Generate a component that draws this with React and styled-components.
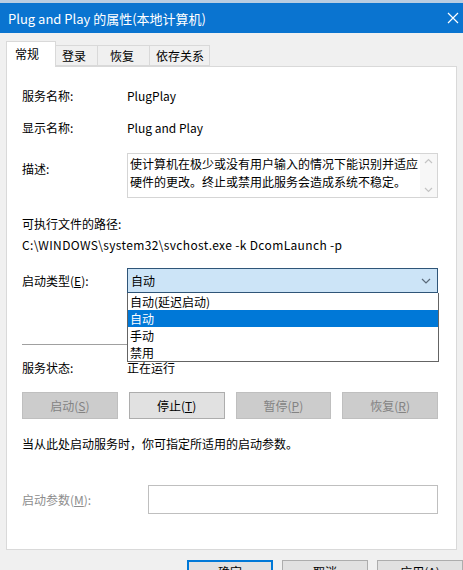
import React from 'react';
import styled, { createGlobalStyle } from 'styled-components';

const GlobalStyle = createGlobalStyle`
  html, body {
    margin: 0;
    padding: 0;
    width: 463px;
    height: 570px;
    overflow: hidden;
    background: #f0f0f0;
  }
  * {
    box-sizing: border-box;
  }
`;

const Window = styled.div`
  width: 463px;
  height: 570px;
  display: flex;
  flex-direction: column;
  background: #f0f0f0;
  font-family: "Noto Sans CJK SC", "Noto Sans", sans-serif;
  font-size: 12px;
  color: #000;
  overflow: hidden;

  & > * {
    flex-shrink: 0;
  }
`;

const TopStrip = styled.div`
  height: 3px;
  background: #b9cde2;
`;

const TitleBar = styled.div`
  height: 30px;
  background: #0a74d0;
  color: #fff;
  display: flex;
  align-items: center;
  justify-content: space-between;
  padding: 0 4px 0 8px;
  font-size: 13px;
`;

const TitleText = styled.span`
  line-height: 1;
`;

const CloseIcon = () => (
  <svg width="12" height="12" viewBox="0 0 12 12">
    <path d="M1 1 L11 11 M11 1 L1 11" stroke="#fff" strokeWidth="1.2" fill="none" />
  </svg>
);

const TabRow = styled.div`
  display: flex;
  align-items: flex-end;
  margin: 8px 0 0 6px;
  height: 25px;
  position: relative;
  z-index: 1;
`;

const Tab = styled.div`
  width: ${p => p.$w}px;
  height: ${p => (p.$active ? 26 : 21)}px;
  display: flex;
  align-items: ${p => (p.$active ? 'flex-start' : 'center')};
  padding: ${p => (p.$active ? '3px 0 0 8px' : `0 0 0 ${p.$pl || 6}px`)};
  background: ${p => (p.$active ? '#fff' : '#f0f0f0')};
  border: 1px solid #d9d9d9;
  border-bottom: ${p => (p.$active ? 'none' : '1px solid #d9d9d9')};
  border-left: ${p => (p.$first || p.$active ? '1px solid #d9d9d9' : 'none')};
  margin-bottom: ${p => (p.$active ? '-1px' : '0')};
  font-size: 12px;
`;

const Panel = styled.div`
  margin: 0 6px;
  height: 484px;
  background: #fff;
  border: 1px solid #d9d9d9;
  padding: 21px 18px 0 15px;
  display: flex;
  flex-direction: column;
`;

const Row = styled.div`
  display: grid;
  grid-template-columns: ${p => p.$label || 105}px 1fr;
  align-items: ${p => p.$top ? 'start' : 'center'};
  margin-top: ${p => p.$mt || 0}px;
`;

const Label = styled.div`
  line-height: 16px;
  color: ${p => (p.$disabled ? '#8d8d8d' : '#000')};
  padding-top: ${p => p.$pt || 0}px;
`;

const Value = styled.div`
  line-height: 16px;
`;

const Line = styled.div`
  line-height: 16px;
  margin-top: ${p => p.$mt || 0}px;
  white-space: nowrap;
  letter-spacing: ${p => p.$ls || 0}px;
`;

const DescBox = styled.div`
  height: 45px;
  border: 1px solid #d5d5d5;
  display: flex;
`;

const DescText = styled.div`
  flex: 1;
  padding: 1px 0 0 2px;
  line-height: 18px;
  white-space: pre-line;
`;

const ScrollBar = styled.div`
  width: 17px;
  display: flex;
  flex-direction: column;
  justify-content: space-between;
  align-items: center;
  padding: 4px 0;
  background: #f7f7f7;
`;

const Arrow = ({ up }) => (
  <svg width="9" height="6" viewBox="0 0 9 6">
    <path d={up ? 'M1 5 L4.5 1.5 L8 5' : 'M1 1 L4.5 4.5 L8 1'} stroke="#c4c4c4" strokeWidth="1.2" fill="none" />
  </svg>
);

const SelectWrap = styled.div`
  position: relative;
  z-index: 2;
`;

const Select = styled.div`
  height: 25px;
  background: #cce4f7;
  border: 1px solid #2f5578;
  display: flex;
  align-items: center;
  justify-content: space-between;
  padding: 0 6px 0 3px;
`;

const Chevron = () => (
  <svg width="10" height="6" viewBox="0 0 10 6">
    <path d="M1 1 L5 5 L9 1" stroke="#5a6a7a" strokeWidth="1.2" fill="none" />
  </svg>
);

const DropList = styled.div`
  position: absolute;
  left: 0;
  right: -1px;
  top: 25px;
  background: #fff;
  border: 1px solid #646464;
  border-top: none;
`;

const Option = styled.div`
  height: 17px;
  line-height: 17px;
  padding-left: 2px;
  background: ${p => (p.$selected ? '#0078d7' : 'transparent')};
  color: ${p => (p.$selected ? '#fff' : '#000')};
`;

const Separator = styled.div`
  height: 1px;
  background: #a0a0a0;
  margin-top: 51px;
`;

const ButtonRow = styled.div`
  display: grid;
  grid-template-columns: repeat(4, 1fr);
  column-gap: 11px;
  margin-top: 16px;
`;

const Button = styled.div`
  height: 27px;
  display: flex;
  align-items: center;
  justify-content: center;
  background: ${p => (p.$disabled ? '#cccccc' : '#e1e1e1')};
  border: 1px solid ${p => (p.$disabled ? '#bfbfbf' : '#adadad')};
  color: ${p => (p.$disabled ? '#838383' : '#000')};
`;

const Input = styled.div`
  height: 29px;
  border: 1px solid #bfbfbf;
  background: #fff;
`;

const Footer = styled.div`
  display: flex;
  gap: 9px;
  padding: 10px 0 0 187px;
`;

const FooterButton = styled.div`
  width: 86px;
  height: 23px;
  display: flex;
  align-items: center;
  justify-content: center;
  background: #e1e1e1;
  border: ${p => (p.$primary ? '2px solid #0078d7' : '1px solid #adadad')};
`;

const U = styled.span`
  text-decoration: underline;
`;

export default function App() {
  return (
    <>
      <GlobalStyle />
      <Window>
        <TopStrip />
        <TitleBar>
          <TitleText>Plug and Play 的属性(本地计算机)</TitleText>
          <CloseIcon />
        </TitleBar>
        <TabRow>
          <Tab $w={50} $active $first>常规</Tab>
          <Tab $w={42}>登录</Tab>
          <Tab $w={52} $pl={12}>恢复</Tab>
          <Tab $w={60}>依存关系</Tab>
        </TabRow>
        <Panel>
          <Row>
            <Label>服务名称:</Label>
            <Value>PlugPlay</Value>
          </Row>
          <Row $mt={16}>
            <Label>显示名称:</Label>
            <Value>Plug and Play</Value>
          </Row>
          <Row $mt={17} $top>
            <Label $pt={8}>描述:</Label>
            <DescBox>
              <DescText>
                {'使计算机在极少或没有用户输入的情况下能识别并适应\n硬件的更改。终止或禁用此服务会造成系统不稳定。'}
              </DescText>
              <ScrollBar>
                <Arrow up />
                <Arrow />
              </ScrollBar>
            </DescBox>
          </Row>
          <Line $mt={18}>可执行文件的路径:</Line>
          <Line $mt={5} $ls={0.35}>C:\WINDOWS\system32\svchost.exe -k DcomLaunch -p</Line>
          <Row $mt={15}>
            <Label>启动类型(<U>E</U>):</Label>
            <SelectWrap>
              <Select>
                <span>自动</span>
                <Chevron />
              </Select>
              <DropList>
                <Option>自动(延迟启动)</Option>
                <Option $selected>自动</Option>
                <Option>手动</Option>
                <Option>禁用</Option>
              </DropList>
            </SelectWrap>
          </Row>
          <Separator />
          <Row $mt={15}>
            <Label>服务状态:</Label>
            <Value>正在运行</Value>
          </Row>
          <ButtonRow>
            <Button $disabled>启动(<U>S</U>)</Button>
            <Button>停止(<U>T</U>)</Button>
            <Button $disabled>暂停(<U>P</U>)</Button>
            <Button $disabled>恢复(<U>R</U>)</Button>
          </ButtonRow>
          <Line $mt={17}>当从此处启动服务时，你可指定所适用的启动参数。</Line>
          <Row $mt={33} $label={126}>
            <Label $disabled>启动参数(<U>M</U>):</Label>
            <Input />
          </Row>
        </Panel>
        <Footer>
          <FooterButton $primary>确定</FooterButton>
          <FooterButton>取消</FooterButton>
          <FooterButton>应用(A)</FooterButton>
        </Footer>
      </Window>
    </>
  );
}
